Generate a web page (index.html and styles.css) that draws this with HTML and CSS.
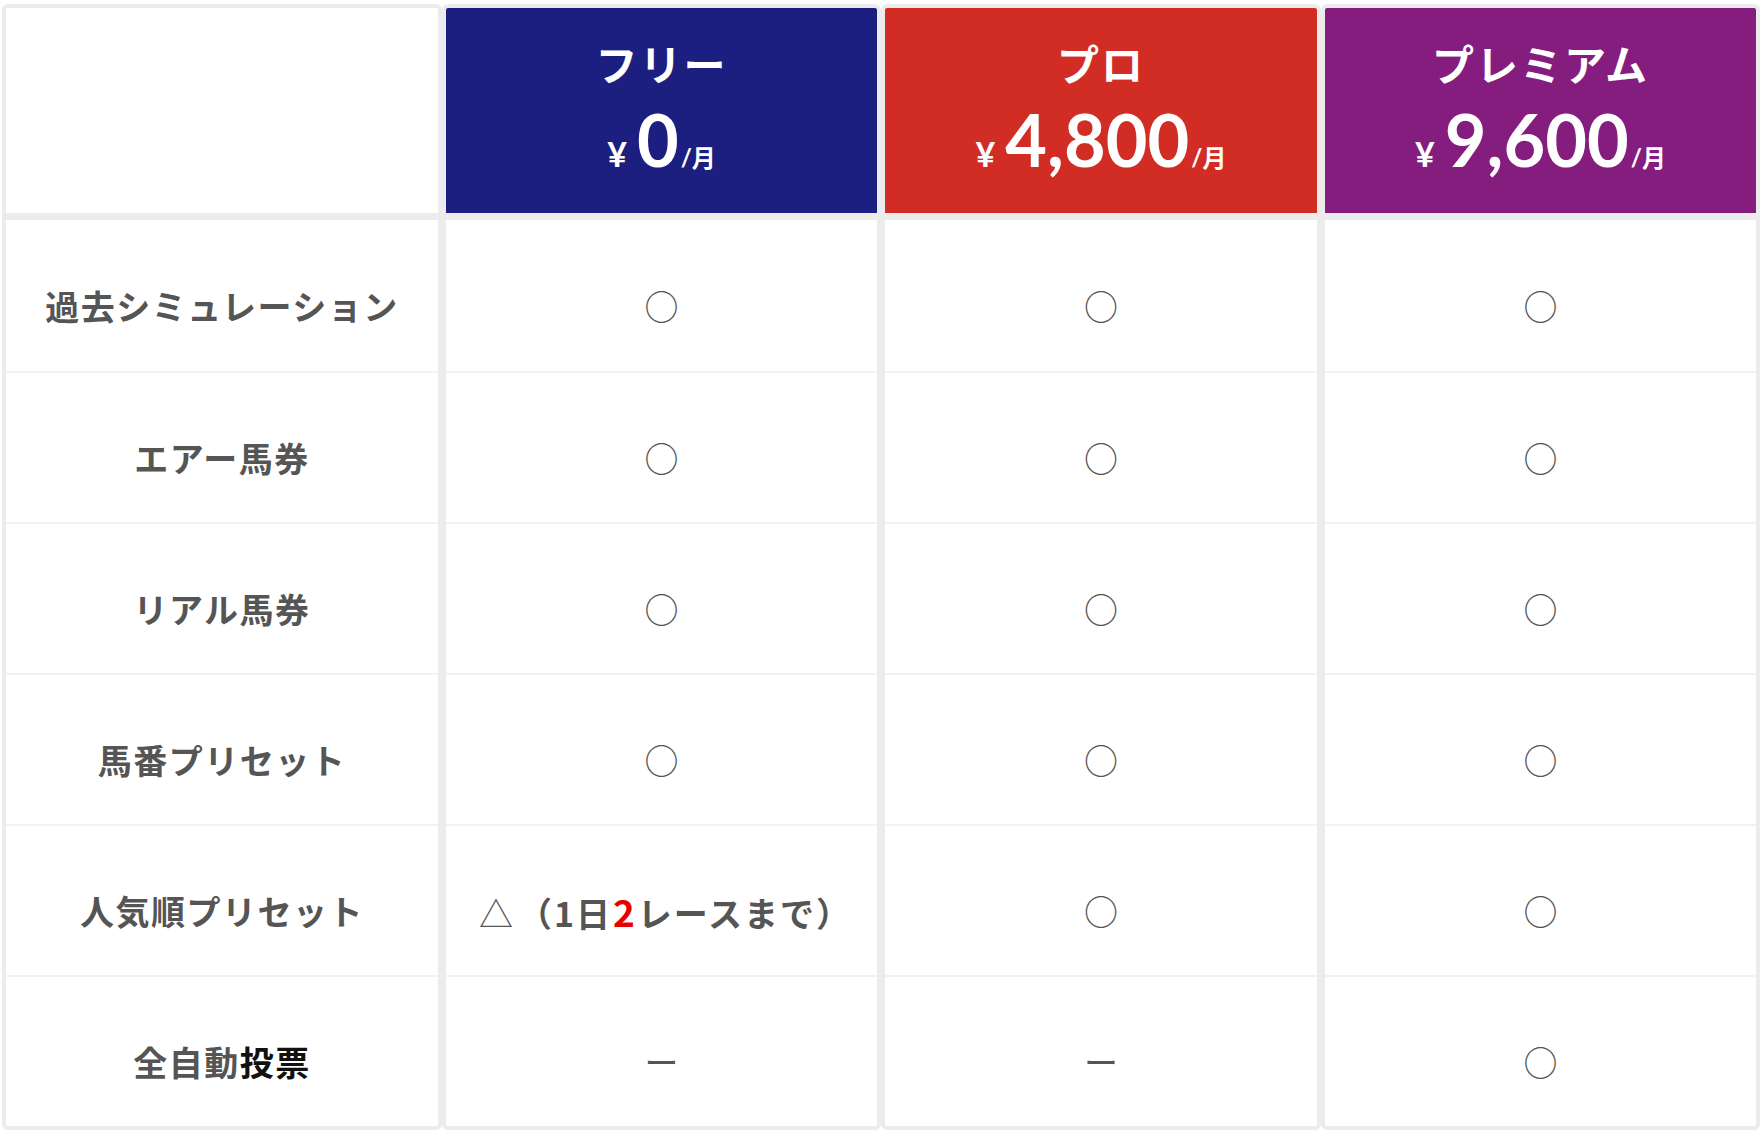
FILE: index.html
```html
<!DOCTYPE html>
<html lang="ja">
<head>
<meta charset="utf-8">
<title>料金プラン</title>
<link rel="stylesheet" href="styles.css">
</head>
<body>
<div class="pricing">
  <div class="col col-label">
    <div class="head head-empty"></div>
    <div class="cell label">過去シミュレーション</div>
    <div class="cell label">エアー馬券</div>
    <div class="cell label">リアル馬券</div>
    <div class="cell label">馬番プリセット</div>
    <div class="cell label">人気順プリセット</div>
    <div class="cell label">全自動<span class="dark">投票</span></div>
  </div>
  <div class="col">
    <div class="head head-free">
      <div class="plan">フリー</div>
      <div class="price"><span class="yen">¥</span><span class="amount">0</span><span class="per">/月</span></div>
    </div>
    <div class="cell"><span class="mark">○</span></div>
    <div class="cell"><span class="mark">○</span></div>
    <div class="cell"><span class="mark">○</span></div>
    <div class="cell"><span class="mark">○</span></div>
    <div class="cell"><span class="note"><span class="mark">△</span>（1日<span class="red">2</span>レースまで）</span></div>
    <div class="cell"><span class="mark dash">ー</span></div>
  </div>
  <div class="col">
    <div class="head head-pro">
      <div class="plan">プロ</div>
      <div class="price"><span class="yen">¥</span><span class="amount">4,800</span><span class="per">/月</span></div>
    </div>
    <div class="cell"><span class="mark">○</span></div>
    <div class="cell"><span class="mark">○</span></div>
    <div class="cell"><span class="mark">○</span></div>
    <div class="cell"><span class="mark">○</span></div>
    <div class="cell"><span class="mark">○</span></div>
    <div class="cell"><span class="mark dash">ー</span></div>
  </div>
  <div class="col">
    <div class="head head-premium">
      <div class="plan">プレミアム</div>
      <div class="price"><span class="yen">¥</span><span class="amount">9,600</span><span class="per">/月</span></div>
    </div>
    <div class="cell"><span class="mark">○</span></div>
    <div class="cell"><span class="mark">○</span></div>
    <div class="cell"><span class="mark">○</span></div>
    <div class="cell"><span class="mark">○</span></div>
    <div class="cell"><span class="mark">○</span></div>
    <div class="cell"><span class="mark">○</span></div>
  </div>
</div>
</body>
</html>
```

FILE: styles.css
```css
html, body {
  margin: 0;
  padding: 0;
  background: #ffffff;
}

body {
  font-family: "Noto Sans CJK JP", "Noto Sans", sans-serif;
  color: #555555;
}

.pricing {
  display: grid;
  grid-template-columns: 440px 439px 440px 439px;
  padding: 4px 0 0 2px;
}

.col {
  display: flex;
  flex-direction: column;
  border: 4px solid #ececec;
  border-radius: 6px;
  overflow: hidden;
  background: #ffffff;
}

.head {
  height: 212px;
  box-sizing: border-box;
  border-bottom: 7px solid #ececec;
  display: flex;
  flex-direction: column;
  align-items: center;
  padding-top: 30px;
  color: #ffffff;
}

.head-empty { background: #ffffff; }
.head-free { background: #1c1f7f; }
.head-pro { background: #d22d25; }
.head-premium { background: #851d7f; }

.plan {
  font-size: 42px;
  font-weight: 700;
  line-height: 50px;
  letter-spacing: 2px;
}

.price {
  font-family: Lato, "Noto Sans CJK JP", sans-serif;
  font-weight: 700;
  line-height: 80px;
  height: 80px;
  margin-top: 15px;
  white-space: nowrap;
}

.yen {
  font-size: 34px;
  line-height: 1;
  margin-right: 10px;
}

.amount {
  font-size: 72px;
  line-height: 1;
}

.per {
  font-size: 24px;
  line-height: 1;
  margin-left: 2px;
}

.cell {
  height: 151px;
  box-sizing: border-box;
  border-top: 2px solid #f2f2f2;
  display: flex;
  align-items: center;
  justify-content: center;
  padding-top: 20px;
}

.head + .cell {
  border-top: 0;
}

.label {
  font-size: 34px;
  font-weight: 700;
  letter-spacing: 1.5px;
  color: #555555;
}

.dark {
  color: #111111;
}

.mark {
  font-size: 34px;
  font-weight: 400;
  color: #555555;
  line-height: 1;
}

.note {
  font-size: 34px;
  font-weight: 700;
  color: #555555;
  letter-spacing: 2px;
  white-space: nowrap;
  margin-left: 8px;
}

.note .mark {
  margin-right: 3px;
}

.red {
  color: #e60000;
  font-size: 37px;
  margin: 0 1px;
}
```
